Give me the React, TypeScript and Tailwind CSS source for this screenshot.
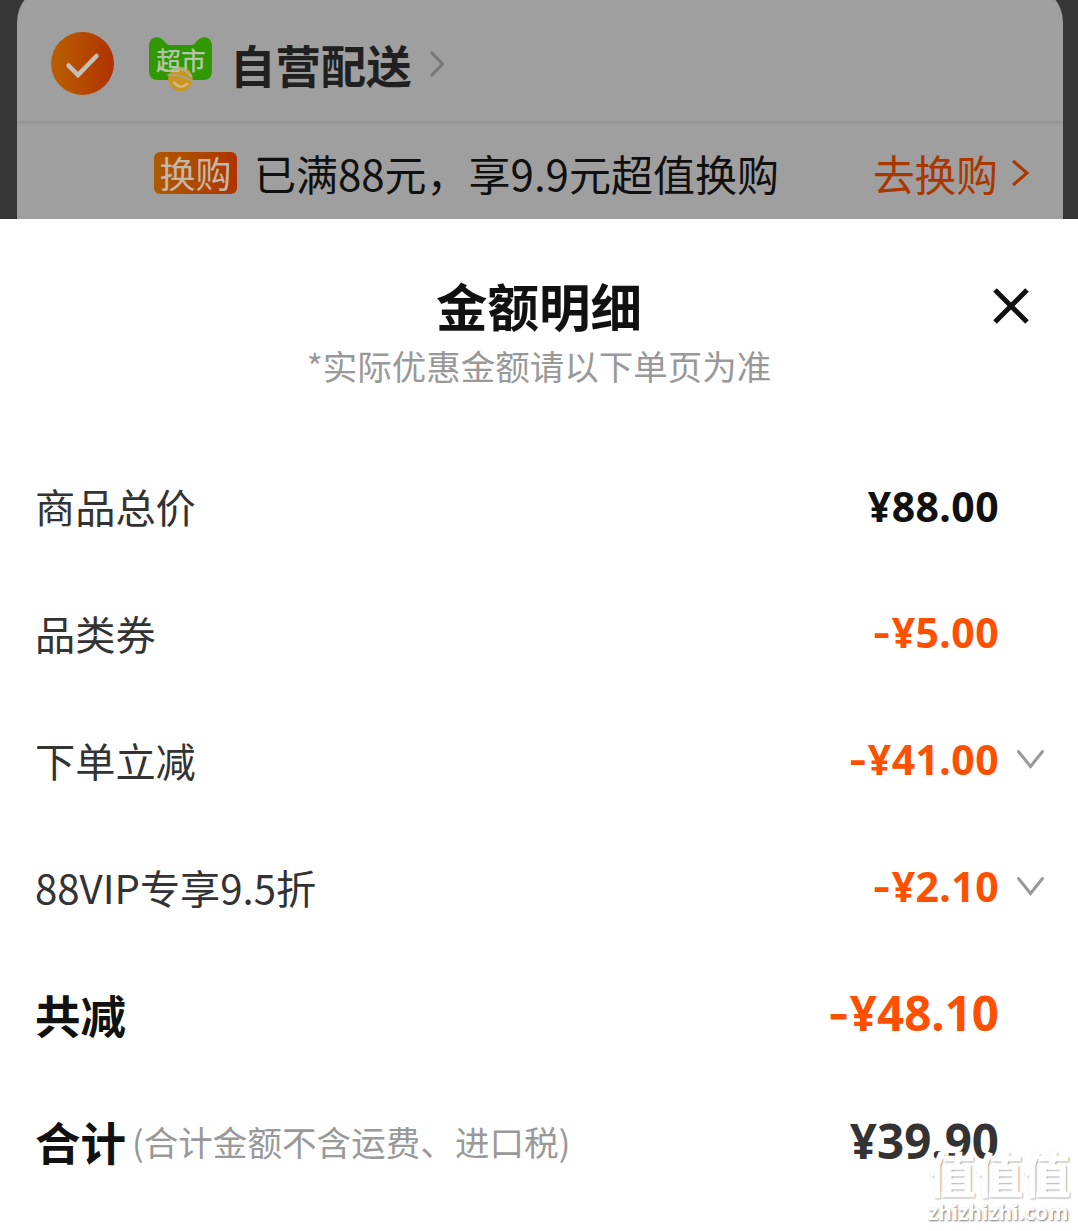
import React from 'react';
import clsx from 'clsx';

type Row = {
  label: string;
  note?: string;
  amount: string;
  tone: 'dark' | 'grey' | 'orange';
  strong?: boolean;
  expandable?: boolean;
};

const rows: Row[] = [
  { label: '商品总价', amount: '¥88.00', tone: 'dark' },
  { label: '品类券', amount: '¥5.00', tone: 'orange' },
  { label: '下单立减', amount: '¥41.00', tone: 'orange', expandable: true },
  { label: '88VIP专享9.5折', amount: '¥2.10', tone: 'orange', expandable: true },
  { label: '共减', amount: '¥48.10', tone: 'orange', strong: true },
  { label: '合计', note: '(合计金额不含运费、进口税)', amount: '¥39.90', tone: 'grey', strong: true },
];

function CheckCircle() {
  return (
    <div className="flex h-[63px] w-[63px] items-center justify-center rounded-full bg-gradient-to-r from-[#b95f00] to-[#b03100]">
      <svg width="63" height="63" viewBox="0 0 63 63" fill="none">
        <path d="M17.5 33.5L27 43L45.5 24" stroke="#c4c0bc" strokeWidth="4.5" strokeLinecap="round" strokeLinejoin="miter" />
      </svg>
    </div>
  );
}

function MarketLogo() {
  return (
    <div className="relative h-[56px] w-[63px]">
      <svg className="block" width="63" height="56" viewBox="0 0 63 56" fill="none">
        <path
          d="M0 9C0 0 9 -2 14 3C17 6 18 8 22 8H41C45 8 46 6 49 3C54 -2 63 0 63 9V34Q63 43 54 43H9Q0 43 0 34Z"
          fill="#309800"
        />
        <circle cx="31.5" cy="42" r="12.3" fill="#c99624" />
        <path d="M10 32.5Q15 31.5 20 34Q32 27 43 40" stroke="#a9b98f" strokeWidth="1.8" />
        <path d="M18.5 38Q31 37 44 44" stroke="#a2a68a" strokeWidth="1.8" />
        <path d="M25 45.5Q31 53 38 47" stroke="#d2bd86" strokeWidth="2.5" strokeLinecap="round" />
      </svg>
      <span className="absolute top-[9px] left-[7px] text-[25px] leading-[26px] font-medium text-[#b3c4a9]">超市</span>
    </div>
  );
}

function ShopCard() {
  return (
    <div className="h-[219px] overflow-hidden bg-[#363636] pr-[15px] pl-[17px]">
      <div className="-mt-[14px] h-[260px] rounded-t-[36px] bg-[#9f9f9f] pt-[14px]">
        <div className="flex h-[124px] items-center border-b-3 border-[#969696] pt-[6px] pl-[34px]">
          <CheckCircle />
          <div className="mt-[2px] ml-[35px]">
            <MarketLogo />
          </div>
          <span className="ml-[18px] text-[45.4px] leading-[60px] font-bold text-[#202020]">自营配送</span>
          <svg className="ml-[16px]" width="18" height="28" viewBox="0 0 18 28" fill="none">
            <path d="M3 2L14.5 14L3 26" stroke="#777" strokeWidth="3" />
          </svg>
        </div>
        <div className="flex h-[96px] items-center pt-[2px] pl-[137px]">
          <span className="flex h-[42px] w-[83px] items-center justify-center rounded-[6px] bg-gradient-to-r from-[#ae5900] to-[#ae3400] pb-[2px] text-[36px] leading-[42px] text-[#c4b7a8]">
            换购
          </span>
          <span className="ml-[17px] text-[42px] leading-[60px] text-[#101010]">已满88元，享9.9元超值换购</span>
          <span className="mr-[12px] ml-auto text-[41.7px] leading-[60px] text-[#a93700]">去换购</span>
          <svg className="mr-[33px]" width="20" height="28" viewBox="0 0 20 28" fill="none">
            <path d="M3 2L17 14L3 26" stroke="#a93700" strokeWidth="3" />
          </svg>
        </div>
      </div>
    </div>
  );
}

function AmountRow({ label, note, amount, tone, strong, expandable }: Row) {
  return (
    <div className="flex h-[127px] items-center pl-[35px]">
      <span
        className={clsx(
          'leading-[60px]',
          strong ? 'text-[45.5px] font-bold text-[#111]' : 'text-[40.2px] text-[#333]',
        )}
      >
        {label}
      </span>
      {note && <span className="ml-[6px] text-[34.6px] leading-[60px] text-[#999]">{note}</span>}
      <span
        className={clsx(
          "ml-auto font-['Noto_Sans',sans-serif] leading-[60px] font-bold",
          strong ? 'text-[47.5px]' : 'text-[41px] tracking-[0.4px]',
          tone === 'dark' && 'text-[#111]',
          tone === 'grey' && 'text-[#333]',
          tone === 'orange' && 'text-[#ff5000]',
        )}
      >
        {tone === 'orange' && <span className="font-['Inter']">-</span>}
        {amount}
      </span>
      <div className="flex w-[79px] pl-[17px]">
        {expandable && (
          <svg width="30" height="22" viewBox="0 0 30 22" fill="none">
            <path d="M2.5 2.5L14.5 17.5L26.5 2.5" stroke="#999" strokeWidth="3" strokeLinecap="round" />
          </svg>
        )}
      </div>
    </div>
  );
}

function Watermark() {
  return (
    <div className="absolute top-[1143px] left-[928px] whitespace-nowrap text-white [text-shadow:1px_1px_2px_#777]">
      <div className="text-[47.5px] leading-[60px] font-bold [-webkit-text-stroke:1px_white]">值值值</div>
      <div className="font-['Open_Sans'] text-[20.8px] leading-[19px] font-bold">zhizhizhi.com</div>
    </div>
  );
}

export default function App() {
  return (
    <div className="relative h-[1231px] w-[1078px] overflow-hidden bg-white font-['Noto_Sans_CJK_SC',sans-serif]">
      <ShopCard />
      <div className="relative h-[223px] pt-[55px] text-center">
        <h1 className="text-[51.5px] leading-[62px] font-bold text-[#111]">金额明细</h1>
        <p className="text-[34.5px] leading-[58px] text-[#999]">*实际优惠金额请以下单页为准</p>
        <button type="button" aria-label="关闭" className="absolute top-[68px] right-[48px]">
          <svg className="block" width="38" height="38" viewBox="0 0 38 38" fill="none">
            <path d="M3 3L35 35M35 3L3 35" stroke="#111" strokeWidth="5" />
          </svg>
        </button>
      </div>
      {rows.map((row) => (
        <AmountRow key={row.label} {...row} />
      ))}
      <Watermark />
    </div>
  );
}
